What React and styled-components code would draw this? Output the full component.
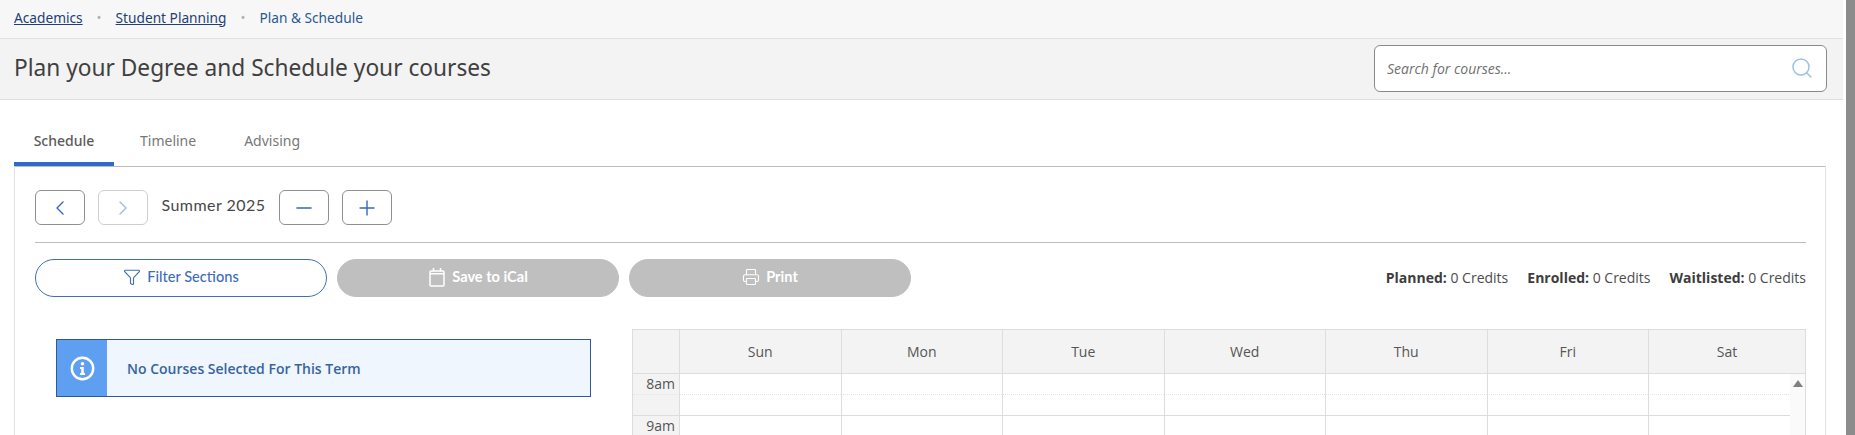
import React from "react";
import styled, { createGlobalStyle } from "styled-components";
import { ChevronLeft, ChevronRight, Minus, Plus, Filter, Printer, Search } from "lucide-react";

const GlobalStyle = createGlobalStyle`
  html, body {
    margin: 0;
    height: 435px;
    overflow: hidden;
    background: #fff;
  }
  * {
    box-sizing: border-box;
  }
`;

const days = ["Sun", "Mon", "Tue", "Wed", "Thu", "Fri", "Sat"];
const rows = [
  { label: "8am", half: false },
  { label: "", half: true },
  { label: "9am", half: false },
];

const App = () => {
  return (
    <Page>
      <GlobalStyle />
      <Main>
        <Breadcrumbs>
          <Crumb href="#">Academics</Crumb>
          <Dot>•</Dot>
          <Crumb href="#">Student Planning</Crumb>
          <Dot>•</Dot>
          <Current>Plan &amp; Schedule</Current>
        </Breadcrumbs>
        <Header>
          <Title>Plan your Degree and Schedule your courses</Title>
          <SearchBox>
            <SearchInput placeholder="Search for courses..." />
            <SearchGlyph>
              <Search size={24} strokeWidth={1.5} color="#9dc0ea" />
            </SearchGlyph>
          </SearchBox>
        </Header>
        <Tabs>
          <Tab $active>Schedule</Tab>
          <Tab>Timeline</Tab>
          <Tab>Advising</Tab>
        </Tabs>
        <Panel>
          <TermRow>
            <NavButton>
              <ChevronLeft size={24} strokeWidth={1.4} />
            </NavButton>
            <NavButton $disabled>
              <ChevronRight size={24} strokeWidth={1.4} />
            </NavButton>
            <TermName>Summer 2025</TermName>
            <NavButton>
              <Minus size={24} strokeWidth={1.6} />
            </NavButton>
            <NavButton>
              <Plus size={24} strokeWidth={1.4} />
            </NavButton>
          </TermRow>
          <Divider />
          <ActionRow>
            <PillButton $width={292}>
              <Filter size={18} strokeWidth={1.5} />
              Filter Sections
            </PillButton>
            <PillButton $width={282} $disabled>
              <CalendarIcon />
              Save to iCal
            </PillButton>
            <PillButton $width={282} $disabled>
              <Printer size={18} strokeWidth={1.5} />
              Print
            </PillButton>
            <Credits>
              <Credit>
                <b>Planned:</b> 0 Credits
              </Credit>
              <Credit>
                <b>Enrolled:</b> 0 Credits
              </Credit>
              <Credit>
                <b>Waitlisted:</b> 0 Credits
              </Credit>
            </Credits>
          </ActionRow>
          <Content>
            <Alert>
              <AlertIcon>
                <InfoIcon />
              </AlertIcon>
              <AlertText>No Courses Selected For This Term</AlertText>
            </Alert>
            <Calendar>
              <HeadRow>
                <HeadCell />
                {days.map((d) => (
                  <HeadCell key={d}>{d}</HeadCell>
                ))}
              </HeadRow>
              {rows.map((r, i) => (
                <BodyRow key={i}>
                  <TimeCell $dotted={!r.half}>{r.label}</TimeCell>
                  {days.map((d) => (
                    <DayCell key={d} $dotted={!r.half} />
                  ))}
                </BodyRow>
              ))}
              <ScrollTrack>
                <ScrollArrow />
              </ScrollTrack>
            </Calendar>
          </Content>
        </Panel>
      </Main>
      <PageScrollbar />
    </Page>
  );
};

const CalendarIcon = () => (
  <svg width="18" height="20" viewBox="0 0 18 20" fill="none" stroke="currentColor" strokeWidth="1.5">
    <rect x="2" y="4" width="14" height="15" rx="1" />
    <path d="M2 6.8h14M5.5 1v3.5M12.5 1v3.5" />
  </svg>
);

const InfoIcon = () => (
  <svg width="25" height="25" viewBox="0 0 25 25" fill="none">
    <circle cx="12.5" cy="12.5" r="10.7" stroke="#fff" strokeWidth="2.4" />
    <circle cx="12.5" cy="7.8" r="1.8" fill="#fff" />
    <path d="M10 11h3.8v6H15v2H10v-2h1.2v-4H10z" fill="#fff" />
  </svg>
);

const Page = styled.div`
  display: flex;
  width: 1855px;
  height: 435px;
  overflow: hidden;
  font-family: "Open Sans", sans-serif;
`;

const Main = styled.div`
  width: 1846px;
  padding-right: 3px;
`;

const PageScrollbar = styled.div`
  width: 9px;
  background: #8c8c8c;
`;

const Breadcrumbs = styled.nav`
  display: flex;
  align-items: center;
  height: 39px;
  padding: 0 0 4px 14px;
  background: #f7f7f7;
  border-bottom: 1px solid #e2e2e2;
  font-family: "Noto Sans", sans-serif;
  font-size: 13.7px;
`;

const Crumb = styled.a`
  color: #1f3f77;
  text-decoration: underline;
`;

const Dot = styled.span`
  width: 33px;
  text-align: center;
  font-size: 12px;
  color: #b0b0b0;
`;

const Current = styled.span`
  color: #2c5792;
`;

const Header = styled.header`
  display: flex;
  align-items: center;
  justify-content: space-between;
  height: 61px;
  padding: 0 16px 0 14px;
  background: #f3f3f3;
  border-bottom: 1px solid #e0e0e0;
`;

const Title = styled.h1`
  margin: 0 0 4px;
  font-family: "Noto Sans", sans-serif;
  font-size: 22.7px;
  font-weight: 400;
  color: #403f3f;
`;

const SearchBox = styled.div`
  display: flex;
  align-items: center;
  width: 453px;
  height: 47px;
  margin-bottom: 2px;
  padding: 0 12px;
  background: #fff;
  border: 1px solid #8a8a8a;
  border-radius: 6px;
`;

const SearchInput = styled.input`
  flex: 1;
  min-width: 0;
  border: 0;
  outline: 0;
  padding: 0;
  background: transparent;
  font-family: "Open Sans", sans-serif;
  font-size: 14px;
  font-style: italic;
  &::placeholder {
    color: #6f6f6f;
    opacity: 1;
  }
`;

const SearchGlyph = styled.span`
  display: flex;
`;

const Tabs = styled.div`
  display: flex;
  height: 66px;
  padding: 25px 0 0 14px;
`;

const Tab = styled.div`
  display: flex;
  align-items: center;
  justify-content: center;
  height: 41px;
  width: ${(p) => (p.$active ? "100px" : "auto")};
  margin-right: ${(p) => (p.$active ? "26px" : "48px")};
  border-bottom: 4px solid ${(p) => (p.$active ? "#2d6ac9" : "transparent")};
  padding-bottom: 6px;
  font-family: "Noto Sans", sans-serif;
  font-size: 14px;
  font-weight: ${(p) => (p.$active ? 500 : 400)};
  color: ${(p) => (p.$active ? "#5c5b5b" : "#777")};
`;

const Panel = styled.section`
  width: 1812px;
  margin-left: 14px;
  padding: 23px 19px 0 20px;
  border: 1px solid #e2e2e2;
  border-top-color: #bcbcbc;
  border-bottom: 0;
`;

const TermRow = styled.div`
  display: flex;
  align-items: flex-start;
  height: 35px;
`;

const NavButton = styled.button`
  display: flex;
  align-items: center;
  justify-content: center;
  width: 50px;
  height: 35px;
  margin-right: 13.25px;
  padding: 0;
  background: #fff;
  border: 1px solid ${(p) => (p.$disabled ? "#cfcfcf" : "#8f8f8f")};
  border-radius: 6px;
  color: ${(p) => (p.$disabled ? "#a3b9e0" : "#3369bf")};
`;

const TermName = styled.div`
  width: 117.5px;
  padding-top: 5px;
  font-family: "Lato", sans-serif;
  font-size: 16px;
  letter-spacing: 0.45px;
  color: #474747;
`;

const Divider = styled.hr`
  height: 1px;
  margin: 17px 0 16px;
  border: 0;
  background: #bdbdbd;
`;

const ActionRow = styled.div`
  display: flex;
  align-items: center;
  gap: 10px;
  height: 38px;
`;

const PillButton = styled.button`
  display: flex;
  align-items: center;
  justify-content: center;
  gap: 6px;
  width: ${(p) => p.$width}px;
  height: 38px;
  padding: 0 0 3px;
  border: 1px solid ${(p) => (p.$disabled ? "#bfbfbf" : "#3f6db8")};
  border-radius: 19px;
  background: ${(p) => (p.$disabled ? "#bfbfbf" : "#fff")};
  color: ${(p) => (p.$disabled ? "#fff" : "#3f6db8")};
  font-family: "Lato", sans-serif;
  font-size: 14.6px;
  font-weight: ${(p) => (p.$disabled ? 700 : 500)};
`;

const Credits = styled.div`
  display: flex;
  gap: 19px;
  margin: 0 0 2px auto;
  font-size: 14px;
  color: #4c4c4c;
`;

const Credit = styled.span`
  b {
    font-weight: 700;
    color: #3d3d3d;
  }
`;

const Content = styled.div`
  display: flex;
  align-items: flex-start;
  margin-top: 32px;
`;

const Alert = styled.div`
  display: flex;
  width: 535px;
  height: 58px;
  margin: 10px 41px 0 21px;
  border: 1px solid #2f5a9a;
  background: #eff6fd;
`;

const AlertIcon = styled.div`
  display: flex;
  align-items: center;
  justify-content: center;
  width: 50px;
  background: #5f9ff2;
`;

const AlertText = styled.div`
  display: flex;
  align-items: center;
  padding-left: 20px;
  font-family: "Open Sans", sans-serif;
  font-size: 14px;
  font-weight: 600;
  color: #39649f;
`;

const Calendar = styled.div`
  position: relative;
  width: 1174px;
  flex-shrink: 0;
  border-left: 1px solid #ddd;
  border-right: 1px solid #ddd;
`;

const gridColumns = "46px repeat(6, 161.5px) 1fr";

const HeadRow = styled.div`
  display: grid;
  grid-template-columns: ${gridColumns};
  height: 45px;
  background: #f3f3f3;
  border-top: 1px solid #ddd;
  border-bottom: 1px solid #ddd;
`;

const HeadCell = styled.div`
  display: flex;
  align-items: center;
  justify-content: center;
  border-left: 1px solid #ddd;
  font-size: 14px;
  color: #555;
  &:first-child {
    border-left: 0;
  }
`;

const BodyRow = styled.div`
  display: grid;
  grid-template-columns: ${gridColumns};
  height: 21px;
`;

const TimeCell = styled.div`
  padding-right: 4px;
  background: #f3f3f3;
  border-bottom: 1px ${(p) => (p.$dotted ? "dotted #e4e4e4" : "solid #ddd")};
  text-align: right;
  font-size: 14px;
  line-height: 20px;
  color: #555;
`;

const DayCell = styled.div`
  border-left: 1px solid #ddd;
  border-bottom: 1px ${(p) => (p.$dotted ? "dotted #e4e4e4" : "solid #ddd")};
`;

const ScrollTrack = styled.div`
  position: absolute;
  top: 45px;
  right: 0;
  bottom: 0;
  width: 15px;
  padding-top: 6px;
  background: #fafafa;
  display: flex;
  justify-content: center;
`;

const ScrollArrow = styled.div`
  width: 0;
  height: 0;
  border-left: 5.5px solid transparent;
  border-right: 5.5px solid transparent;
  border-bottom: 7px solid #808080;
`;

export default App;
